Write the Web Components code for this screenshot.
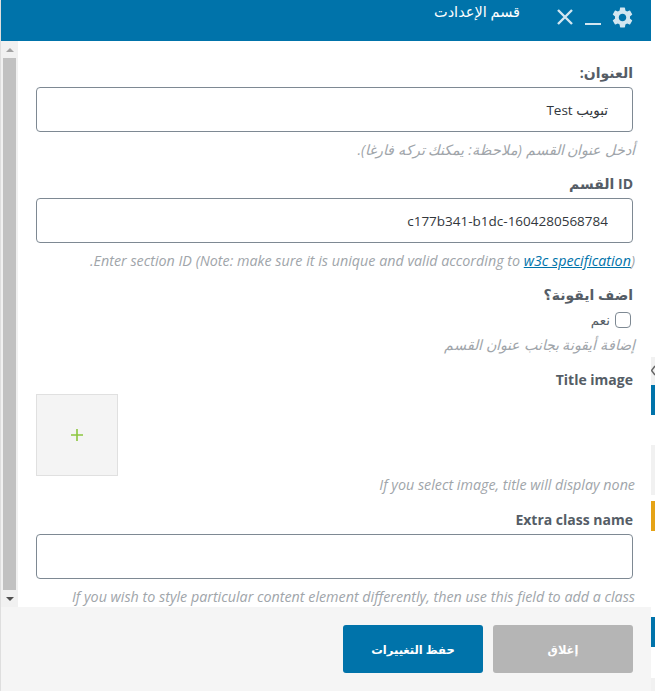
<!DOCTYPE html>
<html lang="ar">
<head>
<meta charset="utf-8">
<title>قسم الإعدادت</title>
<style>
  html, body { margin: 0; height: 100%; background: #fff; overflow: hidden; }
  body { font-family: "Open Sans", "DejaVu Sans", sans-serif; }
</style>
</head>
<body>
<section-modal>
  <modal-header slot="header" title-text="قسم الإعدادت"></modal-header>

  <form-field label="العنوان:" hint="أدخل عنوان القسم (ملاحظة: يمكنك تركه فارغا)." value="تبويب Test"></form-field>
  <form-field label="ID القسم" value="c177b341-b1dc-1604280568784">
    <span slot="hint">Enter section ID (Note: make sure it is unique and valid according to <a href="#" style="color:#0073aa">w3c specification</a>).</span>
  </form-field>
  <check-field label="اضف ايقونة؟" option="نعم" hint="إضافة أيقونة بجانب عنوان القسم"></check-field>
  <image-field label="Title image" hint="If you select image, title will display none"></image-field>
  <form-field label="Extra class name" hint="If you wish to style particular content element differently, then use this field to add a class"></form-field>

  <modal-footer slot="footer"></modal-footer>
</section-modal>

<script>
const FIELD_CSS = `
:host { display: block; direction: rtl; margin-bottom: 16px; }
.lbl { display: block; font-size: 14px; font-weight: 700; line-height: 18px; color: #555d66; margin-bottom: 5px; }
.hint { display: block; font-size: 14.3px; font-style: italic; line-height: 18px; color: #a0a5aa; margin: 9px -2px 0 0; white-space: nowrap; }
`;

class ModalHeader extends HTMLElement {
  constructor() {
    super();
    this.attachShadow({ mode: 'open' });
    this.shadowRoot.innerHTML = `<style>
:host { display: flex; direction: rtl; height: 41px; background: #0073aa; box-sizing: border-box; padding: 5px 16px 0 0; color: #fff; }
.gear { width: 25px; height: 25px; fill: #d2e6f0; }
.min { width: 16px; height: 2px; background: #d2e6f0; margin: 18px 9px 0 11px; }
.close { width: 18px; height: 18px; margin: 3px 0 0 12px; stroke: #d2e6f0; stroke-width: 2.4; fill: none; }
.title { font-size: 14.5px; line-height: 14px; padding-right: 24px; }
</style>
<svg class="gear" viewBox="0 0 24 24"><path d="M19.14 12.94c.04-.3.06-.61.06-.94 0-.32-.02-.64-.07-.94l2.03-1.58a.49.49 0 0 0 .12-.61l-1.92-3.32a.488.488 0 0 0-.59-.22l-2.39.96c-.5-.38-1.03-.7-1.62-.94l-.36-2.54a.484.484 0 0 0-.48-.41h-3.84c-.24 0-.43.17-.47.41l-.36 2.54c-.59.24-1.13.57-1.62.94l-2.39-.96c-.22-.08-.47 0-.59.22L2.74 8.87c-.12.21-.08.47.12.61l2.03 1.58c-.05.3-.09.63-.09.94s.02.64.07.94l-2.03 1.58a.49.49 0 0 0-.12.61l1.92 3.32c.12.22.37.29.59.22l2.39-.96c.5.38 1.03.7 1.62.94l.36 2.54c.05.24.24.41.48.41h3.84c.24 0 .44-.17.47-.41l.36-2.54c.59-.24 1.13-.56 1.62-.94l2.39.96c.22.08.47 0 .59-.22l1.92-3.32c.12-.22.07-.47-.12-.61l-2.01-1.58zM12 15.6c-1.98 0-3.6-1.62-3.6-3.6s1.62-3.6 3.6-3.6 3.6 1.62 3.6 3.6-1.62 3.6-3.6 3.6z"/></svg>
<span class="min"></span>
<svg class="close" viewBox="0 0 18 18"><path d="M2 2l14 14M16 2L2 16"/></svg>
<span class="title"></span>`;
  }
  connectedCallback() {
    this.shadowRoot.querySelector('.title').textContent = this.getAttribute('title-text');
  }
}

class FormField extends HTMLElement {
  constructor() {
    super();
    this.attachShadow({ mode: 'open' });
    this.shadowRoot.innerHTML = `<style>${FIELD_CSS}
.input { display: block; width: 100%; height: 45px; box-sizing: border-box; border: 1px solid #7e8993; border-radius: 4px; background: #fff;
  padding: 0 24px; font: 13.5px/43px "Open Sans", "DejaVu Sans", sans-serif; color: #32373c; direction: rtl; }
.input:focus { outline: none; }
</style>
<label class="lbl"></label>
<input class="input" type="text">
<span class="hint"><slot name="hint"></slot></span>`;
  }
  connectedCallback() {
    const s = this.shadowRoot;
    s.querySelector('.lbl').textContent = this.getAttribute('label');
    s.querySelector('.input').setAttribute('value', this.getAttribute('value') ?? '');
    if (this.hasAttribute('hint')) s.querySelector('slot').textContent = this.getAttribute('hint');
  }
}

class CheckField extends HTMLElement {
  constructor() {
    super();
    this.attachShadow({ mode: 'open' });
    this.shadowRoot.innerHTML = `<style>${FIELD_CSS}
.lbl { margin-bottom: 7px; }
.opt { display: flex; align-items: center; gap: 5px; height: 18px; font-size: 13.5px; color: #555d66; padding-right: 2px; }
.box { width: 16px; height: 16px; box-sizing: border-box; border: 1px solid #7e8993; border-radius: 4px; background: #fff; }
.hint { margin-top: 7px; }
:host { margin-bottom: 17px; }
</style>
<span class="lbl"></span>
<label class="opt"><span class="box"></span><span class="txt"></span></label>
<span class="hint"></span>`;
  }
  connectedCallback() {
    const s = this.shadowRoot;
    s.querySelector('.lbl').textContent = this.getAttribute('label');
    s.querySelector('.txt').textContent = this.getAttribute('option');
    s.querySelector('.hint').textContent = this.getAttribute('hint');
  }
}

class ImageField extends HTMLElement {
  constructor() {
    super();
    this.attachShadow({ mode: 'open' });
    this.shadowRoot.innerHTML = `<style>${FIELD_CSS}
.pick { display: flex; align-items: center; justify-content: center; width: 82px; height: 82px; box-sizing: border-box; margin-right: auto;
  border: 1px solid #e0e0e0; background: #f4f4f4; }
.pick svg { width: 12px; height: 12px; stroke: #8cc63f; stroke-width: 1.6; }
.hint { margin-top: 0; }
:host { margin-bottom: 17px; }
</style>
<span class="lbl"></span>
<div class="pick"><svg viewBox="0 0 12 12"><path d="M6 0v12M0 6h12"/></svg></div>
<span class="hint"></span>`;
  }
  connectedCallback() {
    const s = this.shadowRoot;
    s.querySelector('.lbl').textContent = this.getAttribute('label');
    s.querySelector('.hint').textContent = this.getAttribute('hint');
  }
}

class ModalFooter extends HTMLElement {
  constructor() {
    super();
    this.attachShadow({ mode: 'open' });
    this.shadowRoot.innerHTML = `<style>
:host { display: flex; direction: rtl; gap: 10px; height: 84px; box-sizing: border-box; padding: 18px 18px 0; background: #f5f5f5; }
button { width: 140px; height: 48px; border: 0; border-radius: 3px; color: #fff; font: 600 11.5px "Open Sans", "DejaVu Sans", sans-serif; }
.close { background: #b5b5b5; }
.save { background: #0073aa; }
</style>
<button class="close">إغلاق</button>
<button class="save">حفظ التغييرات</button>`;
  }
}

class SectionModal extends HTMLElement {
  constructor() {
    super();
    this.attachShadow({ mode: 'open' });
    this.shadowRoot.innerHTML = `<style>
:host { display: flex; height: 691px; width: 655px; background: #fff; }
.edge { width: 1px; background: #e9e9e9; flex: none; }
.win { width: 650px; flex: none; display: flex; flex-direction: column; min-width: 0; box-shadow: 0 0 2px rgba(0,0,0,.15); }
.mid { flex: 1; display: flex; min-height: 0; overflow: hidden; background: #fff; }
.bar { width: 17px; flex: none; background: #f1f1f1; display: flex; flex-direction: column; align-items: center; }
.arr { height: 17px; flex: none; display: flex; align-items: center; justify-content: center; }
.arr i { display: block; border-left: 4px solid transparent; border-right: 4px solid transparent; }
.up i { border-bottom: 4px solid #a3a3a3; }
.down i { border-top: 4px solid #505050; }
.thumb { width: 13px; flex: 1; background: #c1c1c1; }
.body { flex: 1; min-width: 0; padding: 23px 18px 0; }
.side { flex: 1; display: flex; flex-direction: column; background: #fff; }
.side i { display: block; flex: none; }
.side .c { height: 28px; background: #f1f1f1; overflow: hidden; }
.side .c svg { display: block; width: 4px; height: 28px; fill: none; stroke: #666; stroke-width: 1.5; }
</style>
<div class="edge"></div>
<div class="win">
  <slot name="header"></slot>
  <div class="mid">
    <div class="bar">
      <div class="arr up"><i></i></div>
      <div class="thumb"></div>
      <div class="arr down"><i></i></div>
    </div>
    <div class="body"><slot></slot></div>
  </div>
  <slot name="footer"></slot>
</div>
<div class="side">
  <i style="height:357px"></i>
  <i class="c"><svg viewBox="0 0 4 28"><path d="M4 9L0.5 13.5L4 18"/></svg></i>
  <i style="height:30px;background:#0073aa"></i>
  <i style="height:30px"></i>
  <i style="height:50px;background:#f1f1f1"></i>
  <i style="height:6px"></i>
  <i style="height:30px;background:#e5a316"></i>
  <i style="height:86px"></i>
  <i style="height:30px;background:#0073aa"></i>
  <i style="height:31px"></i>
  <i style="height:14px;background:#f1f1f1"></i>
</div>`;
  }
}

customElements.define('modal-header', ModalHeader);
customElements.define('form-field', FormField);
customElements.define('check-field', CheckField);
customElements.define('image-field', ImageField);
customElements.define('modal-footer', ModalFooter);
customElements.define('section-modal', SectionModal);
</script>
</body>
</html>
